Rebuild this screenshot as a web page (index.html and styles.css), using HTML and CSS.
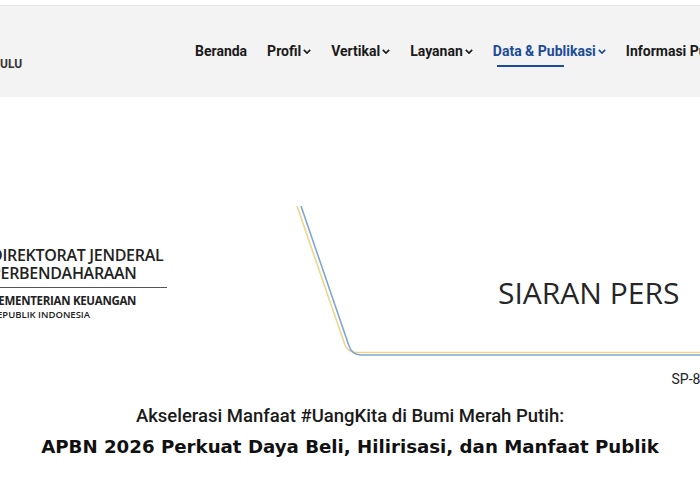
FILE: index.html
```html
<!DOCTYPE html>
<html lang="id">
<head>
    <meta charset="UTF-8">
    <meta name="viewport" content="width=device-width, initial-scale=1.0">
    <title>Siaran Pers - Data &amp; Publikasi</title>
    <link rel="stylesheet" href="styles.css">
</head>
<body>
    <div class="topbar"></div>
    <header class="site-header">
        <div class="brand">ULU</div>
        <nav class="main-nav">
            <a href="#" class="nav-item">Beranda</a>
            <a href="#" class="nav-item">Profil
                <svg class="chev" viewBox="0 0 10 6"><path d="M1 1l4 4 4-4"/></svg></a>
            <a href="#" class="nav-item">Vertikal
                <svg class="chev" viewBox="0 0 10 6"><path d="M1 1l4 4 4-4"/></svg></a>
            <a href="#" class="nav-item">Layanan
                <svg class="chev" viewBox="0 0 10 6"><path d="M1 1l4 4 4-4"/></svg></a>
            <a href="#" class="nav-item active">Data &amp; Publikasi
                <svg class="chev" viewBox="0 0 10 6"><path d="M1 1l4 4 4-4"/></svg></a>
            <a href="#" class="nav-item">Informasi Publik
                <svg class="chev" viewBox="0 0 10 6"><path d="M1 1l4 4 4-4"/></svg></a>
        </nav>
    </header>

    <main class="content">
        <div class="banner">
            <svg class="banner-lines" viewBox="0 0 700 152" preserveAspectRatio="none">
                <path class="line-gold" d="M297 0 L345 139 Q348 146.5 357 146.5 L700 146.5"/>
                <path class="line-blue" d="M301 0 L348.5 138.5 Q351.5 149 361 149 L700 149"/>
            </svg>
            <div class="djpb-logo">
                <div class="djpb-name">DIREKTORAT JENDERAL<br>PERBENDAHARAAN</div>
                <div class="djpb-parent">KEMENTERIAN KEUANGAN</div>
                <div class="djpb-country">REPUBLIK INDONESIA</div>
            </div>
            <div class="banner-title">SIARAN PERS</div>
        </div>

        <div class="press-no">SP-8/PB/2025</div>

        <div class="press-heading">
            <p class="kicker">Akselerasi Manfaat #UangKita di Bumi Merah Putih:</p>
            <h1 class="headline">APBN 2026 Perkuat Daya Beli, Hilirisasi, dan Manfaat Publik</h1>
        </div>
    </main>
</body>
</html>
```

FILE: styles.css
```css
body {
    margin: 0;
    padding: 0;
    background: #fff;
    color: #1a1a1a;
    font-family: Roboto, "Liberation Sans", sans-serif;
    overflow: hidden;
}
.topbar {
    height: 5px;
    background: #fff;
    border-bottom: 1px solid #e6e6e6;
}
.site-header {
    height: 91px;
    background: #f3f3f3;
    display: flex;
    align-items: center;
    white-space: nowrap;
    overflow: hidden;
}
.brand {
    width: 22px;
    margin-top: 25px;
    font-size: 12px;
    font-weight: 700;
    color: #333;
}
.main-nav {
    display: flex;
    align-items: center;
    gap: 20px;
    margin-left: 173px;
    margin-top: -1px;
}
.nav-item {
    position: relative;
    display: flex;
    align-items: center;
    gap: 2px;
    font-size: 14px;
    font-weight: 700;
    color: #1a1a1a;
    text-decoration: none;
}
.nav-item.active {
    color: #1c4c98;
}
.nav-item.active::after {
    content: "";
    position: absolute;
    left: 4px;
    width: 67px;
    bottom: -8px;
    height: 2px;
    background: #1c4c98;
}
.chev {
    width: 8px;
    height: 5px;
    fill: none;
    stroke: currentColor;
    stroke-width: 2;
}

.content {
    padding-top: 109px;
}
.banner {
    position: relative;
    height: 152px;
    display: flex;
    align-items: flex-start;
    overflow: hidden;
}
.banner-lines {
    position: absolute;
    left: 0;
    top: 0;
    width: 700px;
    height: 152px;
}
.banner-lines path {
    fill: none;
    stroke-width: 1.6;
}
.line-gold {
    stroke: #efd58c;
}
.line-blue {
    stroke: #7ea8d2;
}
.djpb-logo {
    position: relative;
    flex: none;
    width: 176px;
    margin-left: -9px;
    margin-top: 40px;
    font-family: "Open Sans", sans-serif;
    color: #222;
}
.djpb-name {
    font-size: 16px;
    font-weight: 600;
    line-height: 18px;
    letter-spacing: -0.3px;
    padding-bottom: 5px;
    border-bottom: 1px solid #555;
}
.djpb-parent {
    margin-top: 5px;
    font-size: 11.5px;
    font-weight: 700;
    letter-spacing: -0.3px;
    line-height: 15px;
}
.djpb-country {
    font-size: 9.5px;
    font-weight: 600;
    line-height: 14px;
}
.banner-title {
    position: relative;
    margin-left: 331px;
    margin-top: 66px;
    font-family: "Open Sans", sans-serif;
    font-size: 30px;
    font-weight: 500;
    color: #262626;
    white-space: nowrap;
}
.press-no {
    margin-top: 13px;
    margin-right: -61px;
    text-align: right;
    font-size: 14px;
    color: #222;
    white-space: nowrap;
}
.press-heading {
    text-align: center;
    margin-top: 18px;
}
.kicker {
    margin: 0;
    font-size: 18.5px;
    font-weight: 500;
    color: #1a1a1a;
}
.headline {
    margin: 9px 0 0;
    font-family: "DejaVu Sans", sans-serif;
    font-size: 18.2px;
    font-weight: 700;
    color: #111;
}
```
